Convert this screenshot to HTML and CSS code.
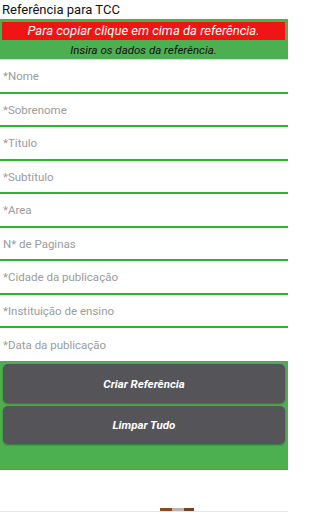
FILE: index.html
```html
<!DOCTYPE html>
<html lang="pt">
<head>
<meta charset="utf-8">
<link rel="stylesheet" href="styles.css">
</head>
<body>
<div class="app">
  <div class="titlebar">Referência para TCC</div>
  <div class="header">
    <div class="notice">Para copiar clique em cima da referência.</div>
    <div class="hint">Insira os dados da referência.</div>
  </div>
  <div class="form">
    <div class="field">*Nome</div>
    <div class="field">*Sobrenome</div>
    <div class="field">*Título</div>
    <div class="field">*Subtítulo</div>
    <div class="field">*Area</div>
    <div class="field">N* de Paginas</div>
    <div class="field">*Cidade da publicação</div>
    <div class="field">*Instituição de ensino</div>
    <div class="field last">*Data da publicação</div>
  </div>
  <div class="actions">
    <button class="btn first">Criar Referência</button>
    <button class="btn second">Limpar Tudo</button>
  </div>
  <div class="ad">
    <div class="ad-thumb"></div>
  </div>
</div>
</body>
</html>
```
FILE: styles.css
```css
html, body {
  margin: 0;
  padding: 0;
  background: #ffffff;
}
.app {
  width: 288px;
  height: 512px;
  overflow: hidden;
  display: flex;
  flex-direction: column;
  font-family: Roboto, "Liberation Sans", sans-serif;
}
.titlebar {
  height: 19px;
  line-height: 20px;
  padding-left: 2px;
  font-size: 13px;
  color: #111;
}
.header {
  height: 41px;
  background: #4caf50;
  padding: 3px 3px 0 2px;
  box-sizing: border-box;
  display: flex;
  flex-direction: column;
  border-bottom: 1px solid #c5e5c6;
}
.notice {
  height: 18px;
  background: #f01414;
  color: #fff;
  font-style: italic;
  font-size: 13px;
  line-height: 18px;
  text-align: center;
}
.hint {
  flex: 1;
  font-style: italic;
  font-size: 11.5px;
  color: #111;
  text-align: center;
  line-height: 21px;
}
.form {
  display: flex;
  flex-direction: column;
}
.field {
  height: 33.5px;
  box-sizing: border-box;
  border-bottom: 2px solid #2db42d;
  padding-left: 3px;
  padding-top: 1px;
  display: flex;
  align-items: center;
  font-size: 11.5px;
  color: #9b9b9b;
}
.field.last {
  border-bottom: none;
  height: 33px;
}
.actions {
  height: 109px;
  background: #4caf50;
  display: flex;
  flex-direction: column;
  gap: 3px;
  padding: 3px 3px 0 3px;
  box-sizing: border-box;
  border-bottom: 1px solid #3fa743;
}
.btn {
  border: none;
  border-radius: 5px;
  background: #555459;
  color: #fff;
  font-family: Roboto, "Liberation Sans", sans-serif;
  font-weight: bold;
  font-style: italic;
  font-size: 11.5px;
  box-shadow: 0 1px 2px rgba(0,0,0,0.35);
  padding: 0;
}
.btn.first { height: 39px; }
.btn.second { height: 38px; }
.ad {
  flex: 1;
  position: relative;
  background: #fff;
  border-bottom: 1px solid #e6e6e6;
}
.ad-thumb {
  position: absolute;
  left: 160px;
  bottom: 0;
  width: 34px;
  height: 3px;
  background: linear-gradient(90deg, #8a4a22 0 35%, #b9b4ad 35% 70%, #7a3d1e 70% 100%);
}
```
